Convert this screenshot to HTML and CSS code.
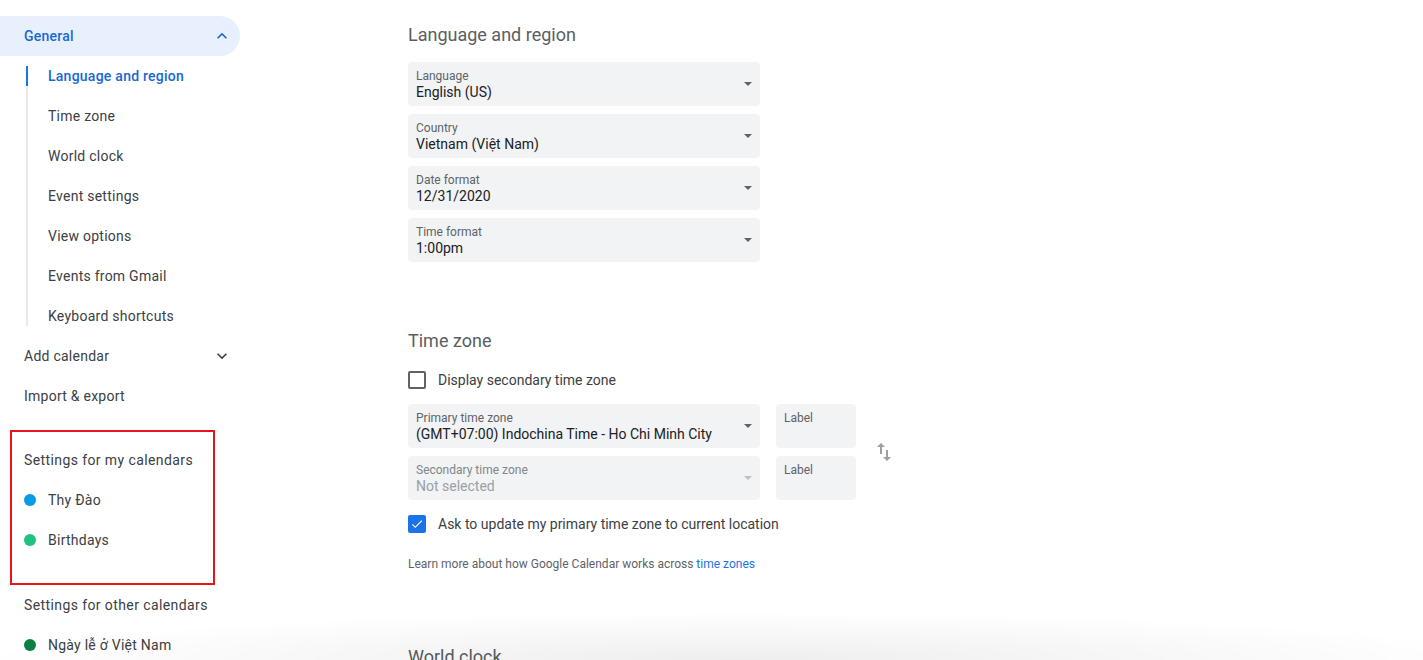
FILE: index.html
```html
<!DOCTYPE html>
<html lang="en">
<head>
  <meta charset="UTF-8">
  <meta name="viewport" content="width=device-width, initial-scale=1.0">
  <title>Settings - Calendar</title>
  <link rel="stylesheet" href="styles.css">
</head>
<body>

  <div class="page">
    <!-- Left navigation -->
    <nav class="sidebar">
      <div class="nav-head active">
        <span>General</span>
        <svg class="chev" viewBox="0 0 24 24" width="20" height="20"><path d="M7.41 15.41L12 10.83l4.59 4.58L18 14l-6-6-6 6z"/></svg>
      </div>
      <ul class="sub-nav">
        <li class="current">Language and region</li>
        <li>Time zone</li>
        <li>World clock</li>
        <li>Event settings</li>
        <li>View options</li>
        <li>Events from Gmail</li>
        <li>Keyboard shortcuts</li>
      </ul>
      <div class="nav-head">
        <span>Add calendar</span>
        <svg class="chev" viewBox="0 0 24 24" width="20" height="20"><path d="M7.41 8.59L12 13.17l4.59-4.58L18 10l-6 6-6-6z"/></svg>
      </div>
      <div class="nav-head">
        <span>Import &amp; export</span>
      </div>

      <div class="highlight-box">
        <div class="nav-title">Settings for my calendars</div>
        <div class="cal-item"><span class="dot dot-blue"></span>Thy Đào</div>
        <div class="cal-item"><span class="dot dot-teal"></span>Birthdays</div>
      </div>

      <div class="nav-title">Settings for other calendars</div>
      <div class="cal-item"><span class="dot dot-green"></span>Ngày lễ ở Việt Nam</div>
    </nav>

    <!-- Settings content -->
    <main class="content">
      <section class="section">
        <h2>Language and region</h2>
        <div class="field-list">
          <div class="select">
            <div class="select-text">
              <span class="select-label">Language</span>
              <span class="select-value">English (US)</span>
            </div>
            <span class="arrow"></span>
          </div>
          <div class="select">
            <div class="select-text">
              <span class="select-label">Country</span>
              <span class="select-value">Vietnam (Việt Nam)</span>
            </div>
            <span class="arrow"></span>
          </div>
          <div class="select">
            <div class="select-text">
              <span class="select-label">Date format</span>
              <span class="select-value">12/31/2020</span>
            </div>
            <span class="arrow"></span>
          </div>
          <div class="select">
            <div class="select-text">
              <span class="select-label">Time format</span>
              <span class="select-value">1:00pm</span>
            </div>
            <span class="arrow"></span>
          </div>
        </div>
      </section>

      <section class="section section-tz">
        <h2>Time zone</h2>
        <label class="check-row">
          <span class="checkbox"></span>
          Display secondary time zone
        </label>

        <div class="tz-grid">
          <div class="select">
            <div class="select-text">
              <span class="select-label">Primary time zone</span>
              <span class="select-value">(GMT+07:00) Indochina Time - Ho Chi Minh City</span>
            </div>
            <span class="arrow"></span>
          </div>
          <div class="label-box">Label</div>
          <svg class="swap" viewBox="0 0 24 24" width="24" height="24"><path d="M16 17.01V10h-2v7.01h-3L15 21l4-3.99h-3zM9 3L5 6.99h3V14h2V6.99h3L9 3z"/></svg>
          <div class="select disabled">
            <div class="select-text">
              <span class="select-label">Secondary time zone</span>
              <span class="select-value">Not selected</span>
            </div>
            <span class="arrow"></span>
          </div>
          <div class="label-box">Label</div>
        </div>

        <label class="check-row checked-row">
          <span class="checkbox checked">
            <svg viewBox="0 0 24 24" width="16" height="16"><path d="M9 16.17L4.83 12l-1.42 1.41L9 19 21 7l-1.41-1.41z"/></svg>
          </span>
          Ask to update my primary time zone to current location
        </label>

        <p class="help">Learn more about how Google Calendar works across <a href="javascript:void(0)">time zones</a></p>
      </section>

      <section class="section section-clock">
        <h2>World clock</h2>
      </section>
    </main>
  </div>

  <div class="bottom-shade"></div>

</body>
</html>
```

FILE: styles.css
```css
body {
  margin: 0;
  font-family: Roboto, "Noto Sans", Arial, sans-serif;
  color: #3c4043;
  background-color: #fff;
  height: 660px;
  overflow: hidden;
}

.page {
  display: flex;
}

/* Sidebar */

.sidebar {
  width: 256px;
  flex-shrink: 0;
  padding-top: 16px;
  font-size: 14px;
  letter-spacing: 0.25px;
}

.nav-head {
  display: flex;
  align-items: center;
  justify-content: space-between;
  height: 40px;
  width: 240px;
  box-sizing: border-box;
  padding: 0 8px 0 24px;
  border-radius: 0 20px 20px 0;
}

.nav-head.active {
  background-color: #e8f0fe;
  color: #1967d2;
  font-weight: 500;
}

.chev {
  fill: #3c4043;
}

.nav-head.active .chev {
  fill: #1967d2;
}

.sub-nav {
  list-style: none;
  margin: 10px 0 10px 26px;
  padding: 0;
  border-left: 2px solid #e8eaed;
  display: flex;
  flex-direction: column;
  gap: 20px;
}

.sub-nav li {
  height: 20px;
  line-height: 20px;
  padding-left: 20px;
}

.sub-nav li.current {
  margin-left: -2px;
  border-left: 2px solid #1a73e8;
  color: #1967d2;
  font-weight: 500;
}

.highlight-box {
  width: 205px;
  box-sizing: border-box;
  margin: 14px 0 0 10px;
  padding: 8px 0 23px 12px;
  border: 2px solid #e8141c;
}

.nav-title {
  height: 40px;
  line-height: 40px;
  padding-left: 24px;
  letter-spacing: 0.4px;
}

.highlight-box .nav-title,
.highlight-box .cal-item {
  padding-left: 0;
}

.cal-item {
  display: flex;
  align-items: center;
  height: 40px;
  padding-left: 24px;
}

.dot {
  width: 12px;
  height: 12px;
  border-radius: 50%;
  margin-right: 12px;
}

.dot-blue {
  background-color: #039be5;
}

.dot-teal {
  background-color: #1fc27f;
}

.dot-green {
  background-color: #0b8043;
}

/* Content */

.content {
  padding: 23px 0 0 152px;
}

.section h2 {
  margin: 0;
  font-size: 18px;
  line-height: 24px;
  font-weight: 400;
  color: #5a5e62;
}

.field-list {
  display: flex;
  flex-direction: column;
  gap: 8px;
  margin-top: 15px;
}

.select {
  display: flex;
  align-items: center;
  justify-content: space-between;
  width: 352px;
  height: 44px;
  box-sizing: border-box;
  padding: 0 8px;
  background-color: #f1f3f4;
  border-radius: 4px;
}

.select-text {
  display: flex;
  flex-direction: column;
  align-self: flex-start;
  padding-top: 6px;
}

.select-label {
  font-size: 12px;
  line-height: 16px;
  color: #5f6368;
}

.select-value {
  font-size: 14px;
  line-height: 16px;
  color: #202124;
}

.arrow {
  width: 0;
  height: 0;
  border-left: 4px solid transparent;
  border-right: 4px solid transparent;
  border-top: 4px solid #5f6368;
}

.select.disabled .select-label {
  color: #80868b;
}

.select.disabled .select-value {
  color: #9aa0a6;
}

.select.disabled .arrow {
  border-top-color: #bdc1c6;
}

.section-tz {
  margin-top: 67px;
}

.check-row {
  display: flex;
  align-items: center;
  height: 24px;
  margin-top: 15px;
  font-size: 14px;
  color: #3c4043;
}

.checkbox {
  width: 18px;
  height: 18px;
  box-sizing: border-box;
  border: 2px solid #5f6368;
  border-radius: 2px;
  margin-right: 12px;
  display: flex;
  align-items: center;
  justify-content: center;
}

.checkbox.checked {
  background-color: #1a73e8;
  border-color: #1a73e8;
}

.checkbox.checked svg {
  fill: #fff;
}

.checked-row {
  margin-top: 12px;
}

.tz-grid {
  display: grid;
  grid-template-columns: 352px 80px 24px;
  grid-template-rows: 44px 44px;
  column-gap: 16px;
  row-gap: 8px;
  margin-top: 12px;
}

.label-box {
  background-color: #f1f3f4;
  border-radius: 4px;
  padding: 6px 8px 0;
  font-size: 12px;
  line-height: 16px;
  color: #5f6368;
}

.swap {
  grid-column: 3;
  grid-row: 1 / span 2;
  align-self: center;
  fill: #9aa0a6;
}

.help {
  margin: 20px 0 0;
  font-size: 12px;
  line-height: 16px;
  color: #5f6368;
}

.help a {
  color: #1a73e8;
  text-decoration: none;
}

.section-clock {
  margin-top: 73px;
}

.bottom-shade {
  position: fixed;
  left: 0;
  right: 0;
  bottom: 0;
  height: 48px;
  pointer-events: none;
  background: radial-gradient(ellipse 760px 48px at 740px 100%, rgba(0, 0, 0, 0.065), rgba(0, 0, 0, 0) 100%);
}
```
